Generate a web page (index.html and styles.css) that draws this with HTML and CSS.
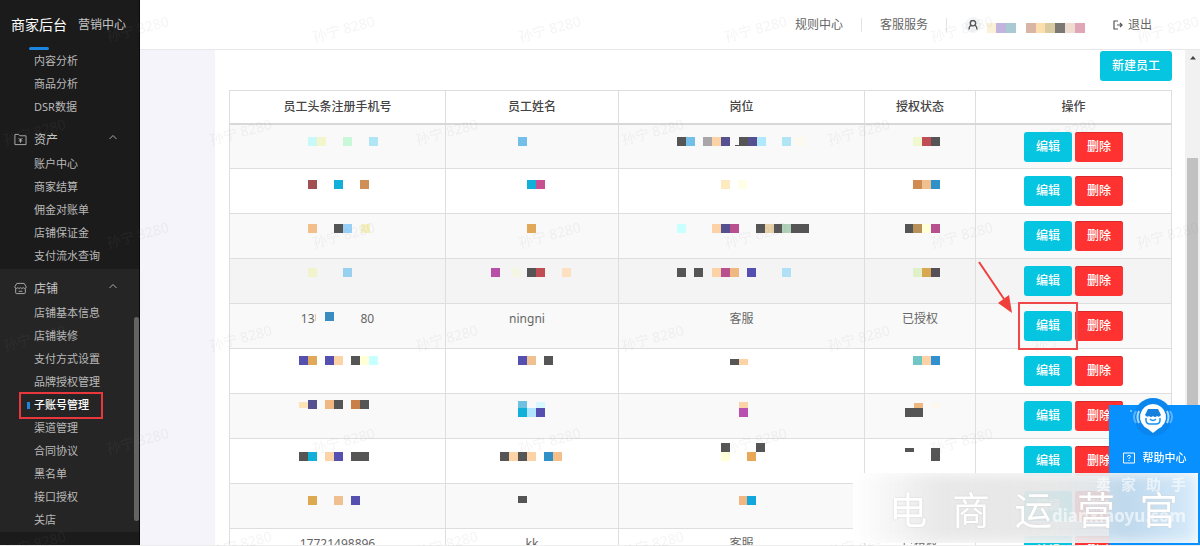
FILE: index.html
```html
<!DOCTYPE html>
<html lang="zh-CN">
<head>
<meta charset="utf-8">
<title>子账号管理</title>
<link rel="stylesheet" href="styles.css">
</head>
<body>
<div class="app">
  <aside class="sidebar">
    <div class="brand">
      <a class="brand-tab active" href="#">商家后台</a>
      <a class="brand-tab" href="#">营销中心</a>
    </div>
    <nav class="menu">
      <ul class="items">
        <li><a href="#">内容分析</a></li>
        <li><a href="#">商品分析</a></li>
        <li><a href="#">DSR数据</a></li>
      </ul>
      <section class="group">
        <button class="group-head" type="button">
          <svg class="group-icon" viewBox="0 0 14 14"><path d="M1 1.500h4l1.300 1.500H13v9.500H1zM7 6v4.500M5 5.500l2 2.300 2-2.300M5 8.500h4"/></svg>
          <span>资产</span>
          <svg class="chevron" viewBox="0 0 8 8"><path d="M.5 6L4 2.500 7.500 6"/></svg>
        </button>
        <ul class="items">
          <li><a href="#">账户中心</a></li>
          <li><a href="#">商家结算</a></li>
          <li><a href="#">佣金对账单</a></li>
          <li><a href="#">店铺保证金</a></li>
          <li><a href="#">支付流水查询</a></li>
        </ul>
      </section>
      <section class="group open">
        <button class="group-head" type="button">
          <svg class="group-icon" viewBox="0 0 14 14"><path d="M3 1.500h8l2 3.500v1.200q-1.500 1.500-3 0-1.500 1.500-3 0-1.500 1.500-3 0-1.500 1.500-3 0V5zM1.800 7v4.500q0 1 1 1h8.400q1 0 1-1V7M5 10h4"/></svg>
          <span>店铺</span>
          <svg class="chevron" viewBox="0 0 8 8"><path d="M.5 6L4 2.500 7.500 6"/></svg>
        </button>
        <ul class="items">
          <li><a href="#">店铺基本信息</a></li>
          <li><a href="#">店铺装修</a></li>
          <li><a href="#">支付方式设置</a></li>
          <li><a href="#">品牌授权管理</a></li>
          <li class="current"><a href="#">子账号管理</a></li>
          <li><a href="#">渠道管理</a></li>
          <li><a href="#">合同协议</a></li>
          <li><a href="#">黑名单</a></li>
          <li><a href="#">接口授权</a></li>
          <li><a href="#">关店</a></li>
        </ul>
      </section>
    </nav>
    <div class="side-thumb"></div>
  </aside>

  <div class="page">
    <header class="topbar">
      <a class="top-link" href="#">规则中心</a>
      <a class="top-link" href="#">客服服务</a>
      <div class="user">
        <svg class="user-icon" viewBox="0 0 16 16"><circle cx="8" cy="8" r="8" fill="#f4f5f7"/><path d="M8 3.500a2.700 2.700 0 1 1 0 5.400 2.700 2.700 0 1 1 0-5.400M5.800 8.200Q4 9.500 4 12.500M10.200 8.200Q12 9.500 12 12.500" fill="none" stroke="#555" stroke-width="1.400"/></svg>
        <svg class="user-name" viewBox="0 0 98 10"><path fill="#fbf1d8" d="M0 0h9v10H0z"/><path fill="#c3b3df" d="M9 0h10v10H9z"/><path fill="#a9c9d3" d="M19 0h10v10H19z"/><path fill="#d9b5a5" d="M39 0h10v10H39z"/><path fill="#fddfae" d="M49 0h9v10h-9z"/><path fill="#d8cba2" d="M58 0h10v10H58z"/><path fill="#7b7773" d="M68 0h10v10H68z"/><path fill="#eddccf" d="M78 0h10v10H78z"/><path fill="#e0a6b8" d="M88 0h10v10H88z"/></svg>
      </div>
      <a class="logout" href="#">
        <svg viewBox="0 0 10 10"><path d="M5 1H1v8h4M4 5h5M7 3l2 2-2 2" fill="none" stroke="#555" stroke-width="1.200"/></svg>
        <span>退出</span>
      </a>
    </header>
    <div class="body">
      <div class="gutter"></div>
      <main class="content">
        <div class="toolbar"><button class="btn primary wide" type="button">新建员工</button></div>
        <table class="staff">
          <colgroup><col class="c-phone"><col class="c-name"><col class="c-post"><col class="c-state"><col class="c-act"></colgroup>
          <thead><tr><th>员工头条注册手机号</th><th>员工姓名</th><th>岗位</th><th>授权状态</th><th>操作</th></tr></thead>
          <tbody>
            <tr>
              <td><svg class="mask m120"><rect x="30" y="13" fill="#c8f8f8"/><rect x="39" y="13" fill="#f5f5cc"/><rect x="65" y="13" fill="#c8f8d8"/><rect x="91" y="13" fill="#b0e5f5"/></svg></td>
              <td><svg class="mask m120"><rect x="46" y="13" fill="#74bfe9"/></svg></td>
              <td><svg class="mask m160"><rect x="15" y="13" fill="#555"/><rect x="24" y="13" fill="#74bfe9"/><rect x="41" y="13" fill="#aaa5a8"/><rect x="50" y="13" fill="#fcd3a6"/><rect x="59" y="13" fill="#555090"/><path d="M73 21h6v1h-6z" fill="#555"/><rect x="77" y="13" fill="#555"/><rect x="86" y="13" fill="#555090"/><rect x="95" y="13" fill="#b0e8ff"/><rect x="120" y="13" fill="#b0e5f5"/><rect x="134" y="13" fill="#fcf9ee"/></svg></td>
              <td><svg class="mask m60"><rect x="23" y="13" fill="#f0f8d0"/><rect x="32" y="13" fill="#c04c55"/><rect x="41" y="13" fill="#555"/></svg></td>
              <td><div class="actions"><button class="btn primary" type="button">编辑</button><button class="btn danger" type="button">删除</button></div></td>
            </tr>
            <tr>
              <td><svg class="mask m120"><rect x="30" y="12" fill="#a05050"/><rect x="56" y="12" fill="#10b0d8"/><rect x="82" y="12" fill="#d09055"/></svg></td>
              <td><svg class="mask m120"><rect x="55" y="12" fill="#10b0d8"/><rect x="64" y="12" fill="#c85090"/></svg></td>
              <td><svg class="mask m160"><rect x="59" y="12" fill="#fdeac0"/><rect x="76" y="12" fill="#ffffe8"/></svg></td>
              <td><svg class="mask m60"><rect x="23" y="12" fill="#d08c50"/><rect x="32" y="12" fill="#f0c090"/><rect x="41" y="12" fill="#3090c8"/></svg></td>
              <td><div class="actions"><button class="btn primary" type="button">编辑</button><button class="btn danger" type="button">删除</button></div></td>
            </tr>
            <tr>
              <td><svg class="mask m120"><rect x="30" y="11" fill="#f2bf8c"/><rect x="56" y="11" fill="#555"/><rect x="65" y="11" fill="#98d0f8"/><rect x="83" y="11" fill="#f5f0c0"/></svg></td>
              <td><svg class="mask m120"><rect x="55" y="11" fill="#e0a858"/></svg></td>
              <td><svg class="mask m160"><rect x="15" y="11" fill="#c8ffff"/><rect x="50" y="11" fill="#fcd3a6"/><rect x="59" y="11" fill="#555090"/><rect x="68" y="11" fill="#b85090"/><rect x="94" y="11" fill="#555"/><rect x="103" y="11" fill="#e8d0a8"/><rect x="112" y="11" fill="#555"/><rect x="120" y="11" fill="#b0d0b8"/><rect x="129" y="11" fill="#555"/><rect x="138" y="11" fill="#555"/></svg></td>
              <td><svg class="mask m60"><rect x="15" y="11" fill="#555"/><rect x="23" y="11" fill="#b89058"/><rect x="32" y="11" fill="#ffffd8"/><rect x="41" y="11" fill="#b85090"/></svg></td>
              <td><div class="actions"><button class="btn primary" type="button">编辑</button><button class="btn danger" type="button">删除</button></div></td>
            </tr>
            <tr class="hover">
              <td><svg class="mask m120"><rect x="30" y="10" fill="#f0f3cc"/><rect x="65" y="10" fill="#98d0f0"/></svg></td>
              <td><svg class="mask m120"><rect x="19" y="10" fill="#b850a8"/><rect x="40" y="10" fill="#f5f5e4"/><rect x="55" y="10" fill="#555"/><rect x="64" y="10" fill="#c04c55"/><rect x="90" y="10" fill="#fce0c0"/></svg></td>
              <td><svg class="mask m160"><rect x="15" y="10" fill="#555"/><rect x="32" y="10" fill="#555"/><rect x="50" y="10" fill="#fcd3a6"/><rect x="59" y="10" fill="#b85090"/><rect x="68" y="10" fill="#f0b880"/><rect x="85" y="10" fill="#5550b0"/><rect x="120" y="10" fill="#b0e0f5"/></svg></td>
              <td><svg class="mask m60"><rect x="23" y="10" fill="#e0f0c8"/><rect x="32" y="10" fill="#d8a850"/><rect x="41" y="10" fill="#555058"/></svg></td>
              <td><div class="actions"><button class="btn primary" type="button">编辑</button><button class="btn danger" type="button">删除</button></div></td>
            </tr>
            <tr>
              <td><div class="partial"><span>13</span><svg class="mask gap"><path d="M0 11h1v7H0z" fill="#e8c8a8"/><rect x="10" y="9" fill="#3a8cc0"/></svg><span>80</span></div></td>
              <td><span class="clipped">ningni</span></td>
              <td>客服</td>
              <td>已授权</td>
              <td><div class="actions"><button class="btn primary" type="button">编辑</button><button class="btn danger" type="button">删除</button><i class="callout"></i><svg class="pointer" viewBox="0 0 38 56"><path d="M2 3l25 37" stroke="#f0403c" stroke-width="2"/><path d="M35 54L21 44l11-8z" fill="#f0403c"/></svg></div></td>
            </tr>
            <tr>
              <td><svg class="mask m120"><rect x="21" y="8" fill="#5550b0"/><rect x="30" y="8" fill="#e0a858"/><rect x="47" y="8" fill="#5550b0"/><rect x="56" y="8" fill="#fcd3a6"/><rect x="73" y="8" fill="#555"/><rect x="82" y="8" fill="#ffffd8"/><rect x="91" y="8" fill="#c8ffff"/></svg></td>
              <td><svg class="mask m120"><rect x="46" y="8" fill="#5550b0"/><rect x="55" y="8" fill="#f0c090"/><rect x="72" y="8" fill="#555"/></svg></td>
              <td><svg class="mask m160"><path d="M68 11h9v6h-9z" fill="#555"/><path d="M77 11h9v6h-9z" fill="#fcd3a6"/></svg></td>
              <td><svg class="mask m60"><rect x="23" y="8" fill="#70c5c5"/><rect x="32" y="8" fill="#fcd3a6"/><rect x="41" y="8" fill="#3090d0"/></svg></td>
              <td><div class="actions"><button class="btn primary" type="button">编辑</button><button class="btn danger" type="button">删除</button></div></td>
            </tr>
            <tr>
              <td><svg class="mask m120"><path d="M21 9h9v6h-9z" fill="#fde4b8"/><rect x="30" y="7" fill="#555090"/><rect x="47" y="7" fill="#f0b880"/><rect x="56" y="7" fill="#555"/><rect x="73" y="7" fill="#c88048"/><rect x="82" y="7" fill="#555"/></svg></td>
              <td><svg class="mask m120"><rect x="46" y="8" fill="#70c0e0"/><path d="M64 9h9v6h-9z" fill="#d8f8ff"/><rect x="46" y="15" fill="#10b0d8"/><rect x="55" y="15" fill="#b0e5ff"/><rect x="64" y="15" fill="#5550b0"/></svg></td>
              <td><svg class="mask m160"><rect x="77" y="9" fill="#fcd3a6"/><rect x="77" y="15" fill="#b850b0"/></svg></td>
              <td><svg class="mask m60"><rect x="24" y="10" fill="#f0b880"/><rect x="15" y="15" fill="#555"/><rect x="24" y="15" fill="#555"/><path d="M43 10h6v5h-6z" fill="#fff8e8"/></svg></td>
              <td><div class="actions"><button class="btn primary" type="button">编辑</button><button class="btn danger" type="button">删除</button></div></td>
            </tr>
            <tr>
              <td><svg class="mask m120"><rect x="21" y="14" fill="#555"/><rect x="30" y="14" fill="#10b0d8"/><rect x="47" y="14" fill="#fcd3a6"/><rect x="56" y="14" fill="#5550b0"/><rect x="73" y="14" fill="#555"/><rect x="82" y="14" fill="#555"/></svg></td>
              <td><svg class="mask m120"><rect x="28" y="14" fill="#555"/><rect x="37" y="14" fill="#fcd3a6"/><rect x="46" y="14" fill="#555"/><rect x="55" y="14" fill="#fcd3a6"/><rect x="72" y="14" fill="#3090c8"/><rect x="81" y="14" fill="#f5bf8c"/></svg></td>
              <td><svg class="mask m160"><rect x="59" y="14" fill="#ffffd8"/><rect x="59" y="5" fill="#555"/><rect x="94" y="5" fill="#555"/><rect x="85" y="14" fill="#e8a858"/></svg></td>
              <td><svg class="mask m60"><path d="M15 10h9v4h-9zM41 10h9v13h-9z" fill="#555"/></svg></td>
              <td><div class="actions"><button class="btn primary" type="button">编辑</button><button class="btn danger" type="button">删除</button></div></td>
            </tr>
            <tr>
              <td><svg class="mask m120"><rect x="30" y="13" fill="#dca850"/><rect x="56" y="13" fill="#f0c090"/><rect x="73" y="13" fill="#5550b0"/></svg></td>
              <td><svg class="mask m120"><path d="M46 13h9v7h-9z" fill="#555"/></svg></td>
              <td><svg class="mask m160"><rect x="77" y="13" fill="#f0b880"/><rect x="85" y="13" fill="#10a8dc"/></svg></td>
              <td></td>
              <td><div class="actions"><button class="btn primary" type="button">编辑</button><button class="btn danger" type="button">删除</button></div></td>
            </tr>
            <tr>
              <td>17721498896</td>
              <td>kk</td>
              <td>客服</td>
              <td>已授权</td>
              <td><div class="actions"><button class="btn primary" type="button">编辑</button><button class="btn danger" type="button">删除</button></div></td>
            </tr>
          </tbody>
        </table>
      </main>
      <div class="scrollbar">
        <svg class="scroll-arrow" viewBox="0 0 8 5"><path d="M1 4.500L4 1l3 3.500z" fill="#444"/></svg>
        <div class="scroll-thumb"></div>
      </div>
    </div>
  </div>
</div>

<svg class="watermark" aria-hidden="true">
  <defs>
    <pattern id="wm" width="206" height="206" patternUnits="userSpaceOnUse">
      <text transform="translate(36 137) rotate(-15)">孙宁 8280</text>
      <text transform="translate(139 34) rotate(-15)">孙宁 8280</text>
      <text transform="translate(242 137) rotate(-15)">孙宁 8280</text>
    </pattern>
  </defs>
  <rect width="100%" height="100%" fill="url(#wm)"/>
</svg>

<div class="help">
  <svg class="help-art" viewBox="0 0 91 52" preserveAspectRatio="xMidYMin slice">
    <path d="M0 7h91v45H0z" fill="#0890ff"/>
    <circle cx="44" cy="19" r="19" fill="#0a86ee"/>
    <path d="M0 32q44 22 91-4v24H0z" fill="#0890ff"/>
    <path d="M27 13q-4 6 0 12M61 13q4 6 0 12" stroke="#5cb4ff" stroke-width="2" fill="none"/>
    <path d="M30 13q-3 6 0 12M58 13q3 6 0 12" stroke="#a9daff" stroke-width="2" fill="none"/>
    <path d="M44 6a13 13 0 0 1 5 25l-5 4-5-4a13 13 0 0 1 5-25z" fill="#fff"/>
    <path d="M39 11h10l3 6q-2 3-4 1-2 2-4 0-2 2-4 0-2 2-4-1z" fill="#1580dd"/>
    <path d="M37 20v2q0 4 4 4h6q4 0 4-4v-2M41 21q3 3 6 0" stroke="#1592f5" stroke-width="1.500" fill="none"/>
    <circle cx="22" cy="13" r="1" fill="#8fd0ff"/>
  </svg>
  <a class="help-link" href="#">
    <svg viewBox="0 0 12 12"><path d="M.5 1h11v10H.5z" fill="none" stroke="#fff"/><path d="M4.500 4.800q0-1.500 1.500-1.500t1.500 1.300q0 .8-1.500 1.700v.7M6 8v1" fill="none" stroke="#fff"/></svg>
    <span>帮助中心</span>
  </a>
</div>

<div class="stamp">
  <div class="stamp-back"><div class="stamp-title"><span>卖</span><span>家</span><span>助</span><span>手</span></div><small>dianxiaoyu.com</small></div>
  <div class="stamp-text"><span>电</span><span>商</span><span>运</span><span>营</span><span>官</span></div>
</div>
</body>
</html>
```
FILE: styles.css
```css
*, *::before, *::after { box-sizing: border-box; }
body {
  margin: 0;
  font: 12px/16px "Noto Sans", "Noto Sans CJK SC", sans-serif;
  color: #666;
  background: #fff;
  overflow: hidden;
}
a { color: inherit; text-decoration: none; }
button { font: inherit; border: 0; margin: 0; padding: 0; cursor: pointer; }
ul { list-style: none; margin: 0; padding: 0; }

.app { display: flex; height: 100vh; border-bottom: 1px solid #eee; overflow: hidden; }

.sidebar { position: relative; flex: 0 0 140px; background: #1b1b1b; color: #b9b9b9; overflow: hidden; border-right: 1px solid #0a0a0a; }
.brand { display: flex; gap: 11px; padding-left: 11px; height: 50px; line-height: 50px; }
.brand-tab { position: relative; color: #c4c4c4; }
.brand-tab.active { color: #fff; font-size: 14px; }
.brand-tab.active::after { content: ""; position: absolute; left: 18px; right: 18px; bottom: 0; height: 3px; border-radius: 2px; background: #1b86e0; }
.items li { height: 23px; line-height: 22px; padding-left: 34px; font-size: 11px; white-space: nowrap; }
.items a { display: block; }
.group { margin-top: 1px; }
.group.open { background: #252525; }
.group-head { display: flex; align-items: center; width: 100%; height: 33px; padding: 6px 22px 0 14px; background: none; color: #c4c4c4; }
.group-icon { width: 13px; height: 13px; margin-right: 7px; fill: none; stroke: #b0b0b0; }
.chevron { width: 8px; height: 8px; margin: 0 0 6px auto; fill: none; stroke: #aaa; }
.current { position: relative; color: #fff; font-weight: 500; }
.current::before { content: ""; position: absolute; left: 19px; top: -2px; width: 84px; height: 27px; border: 2px solid #e8383d; }
.current::after { content: ""; position: absolute; left: 27px; top: 8px; width: 3px; height: 7px; background: #1b86e0; }
.side-thumb { position: absolute; right: 0; top: 317px; width: 5px; height: 204px; border-radius: 3px; background: #646464; }

.page { flex: 1; min-width: 0; display: flex; flex-direction: column; }
.topbar { flex: 0 0 50px; display: flex; align-items: center; justify-content: flex-end; padding-right: 48px; border-bottom: 1px solid #e8e8ec; }
.top-link { padding: 0 18px; border-right: 1px solid #e4e4e4; line-height: 14px; }
.user { display: flex; align-items: center; gap: 6px; margin: 0 28px 0 18px; }
.user-icon { width: 16px; height: 16px; }
.user-name { width: 98px; height: 10px; margin-top: 6px; }
.logout { display: flex; align-items: center; gap: 5px; }
.logout svg { width: 10px; height: 10px; }

.body { flex: 1; min-height: 0; display: flex; overflow: hidden; }
.gutter { flex: 0 0 75px; background: #f4f4fa; }
.content { flex: 1; min-width: 0; padding: 1px 13px 0 14px; }
.toolbar { display: flex; justify-content: flex-end; margin-bottom: 9px; }
.btn { width: 48px; height: 30px; border-radius: 3px; color: #fff; font-weight: 500; }
.primary { background: #06c5e0; }
.danger { background: #fe3231; box-shadow: inset 0 1px #d82a2c; }
.wide { width: 72px; }

.staff { width: 100%; table-layout: fixed; border-collapse: collapse; text-align: center; }
.c-phone { width: 216px; }
.c-name { width: 173px; }
.c-post { width: 246px; }
.c-state { width: 111px; }
.c-act { width: 196px; }
.staff th, .staff td { border: 1px solid #dedede; padding: 0; }
.staff th { height: 33px; font-weight: 500; color: #444; border-bottom: 2px solid #d8d8d8; }
.staff td { height: 45px; padding-top: 7px; vertical-align: top; }
.staff tbody tr:nth-child(odd) { background: #f9f9f9; }
.staff tbody tr.hover { background: #f4f4f4; }
.mask { display: block; height: 32px; margin: -8px auto 0; }
.mask rect { width: 9px; height: 9px; }
.m120 { width: 120px; }
.m160 { width: 160px; }
.m60 { width: 60px; }
.gap { width: 46px; margin: -8px 0 0; }
.partial { display: flex; justify-content: center; }
.clipped { display: inline-block; padding-right: 10px; }
.actions { position: relative; display: inline-flex; gap: 3px; }
.callout { position: absolute; left: -6px; top: -9px; width: 60px; height: 48px; border: 2px solid #f0484a; }
.pointer { position: absolute; left: -47px; top: -52px; width: 38px; height: 56px; }

.scrollbar { flex: 0 0 15px; background: #f1f1f1; padding: 5px 2px 0; }
.scroll-arrow { display: block; width: 8px; height: 5px; margin: 0 auto 98px; }
.scroll-thumb { height: 280px; background: #c1c1c1; }

.watermark { position: fixed; inset: 0; width: 100%; height: 100%; pointer-events: none; }
.watermark text { font-size: 14px; text-anchor: middle; fill: #888; fill-opacity: .09; }

.help { position: fixed; right: 0; bottom: 1px; width: 91px; height: 147px; color: #fff; background: linear-gradient(transparent 10px, #0890ff 10px); }
.help-art { display: block; width: 100%; height: 52px; }
.help-link { display: flex; align-items: center; justify-content: center; gap: 8px; font-size: 11px; font-weight: 500; }
.help-link svg { width: 12px; height: 12px; }

.stamp { position: fixed; right: 2px; bottom: 3px; width: 345px; height: 70px; overflow: hidden; background: linear-gradient(90deg, #fff, rgba(232, 232, 232, .96) 25%, rgba(230, 230, 230, .94) 55%, rgba(218, 227, 234, .88) 80%, rgba(238, 245, 250, .9)); box-shadow: inset 0 0 14px #fff; }
.stamp-back { display: flex; flex-direction: column; align-items: flex-end; padding: 3px 12px; color: rgba(255, 255, 255, .6); font-weight: 700; font-size: 15px; line-height: 16px; }
.stamp-title { display: flex; gap: 10px; }
.stamp-back small { margin-top: 16px; font-size: 17px; }
.stamp-text { position: absolute; inset: 0 8px 0 24px; display: grid; grid-template-columns: repeat(5, 1fr); align-items: center; justify-items: center; color: #fff; font: 38px/70px "Noto Sans CJK SC", sans-serif; text-shadow: 0 0 2px #ccc; }
```
